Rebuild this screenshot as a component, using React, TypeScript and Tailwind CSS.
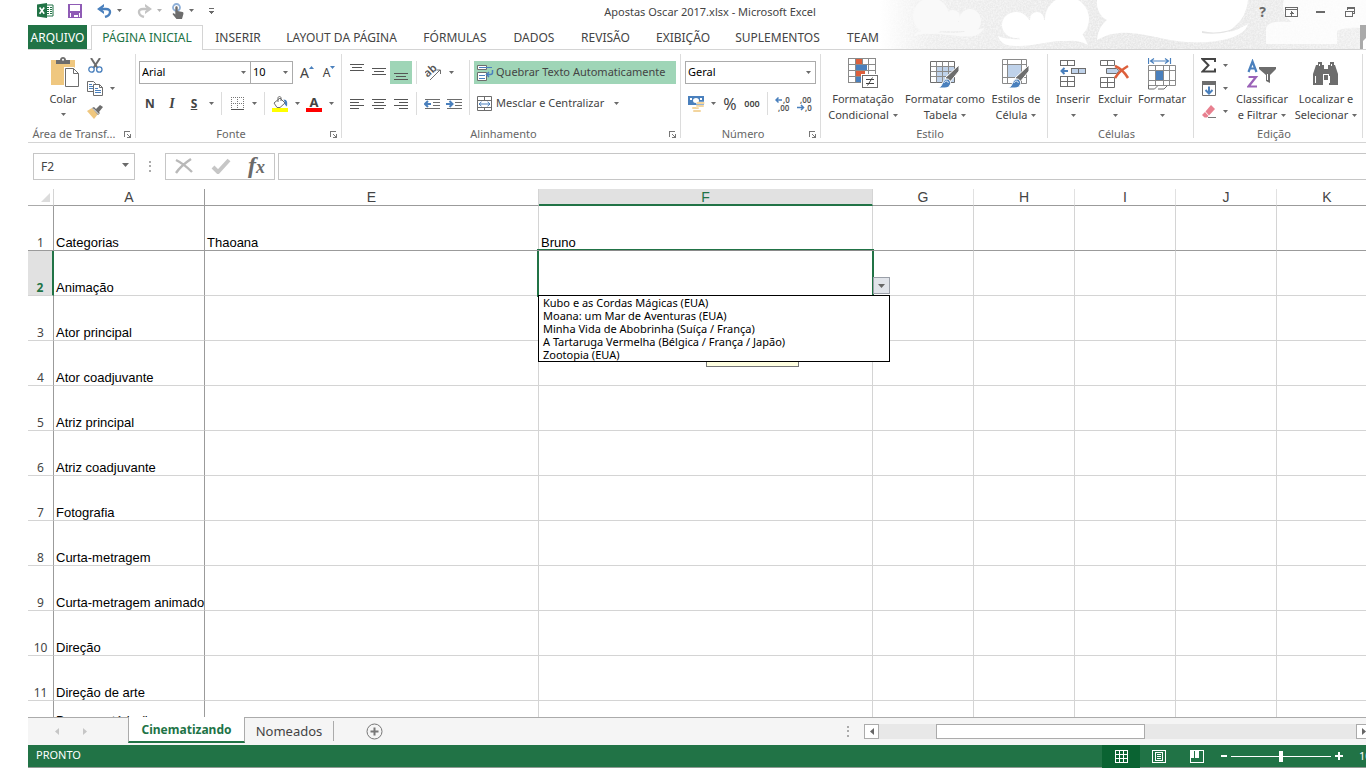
import { useState } from "react"
import type { ReactNode } from "react"

const tabs = [
  { name: "INSERIR", width: "w-[70px]" },
  { name: "LAYOUT DA PÁGINA", width: "w-[137px]" },
  { name: "FÓRMULAS", width: "w-[90px]" },
  { name: "DADOS", width: "w-[68px]" },
  { name: "REVISÃO", width: "w-[75px]" },
  { name: "EXIBIÇÃO", width: "w-[80px]" },
  { name: "SUPLEMENTOS", width: "w-[109px]" },
  { name: "TEAM", width: "w-[62px]" },
]

const rows = [
  "Categorias",
  "Animação",
  "Ator principal",
  "Ator coadjuvante",
  "Atriz principal",
  "Atriz coadjuvante",
  "Fotografia",
  "Curta-metragem",
  "Curta-metragem animado",
  "Direção",
  "Direção de arte",
  "Documentário (longa",
]

const nominees = [
  "Kubo e as Cordas Mágicas (EUA)",
  "Moana: um Mar de Aventuras (EUA)",
  "Minha Vida de Abobrinha (Suíça / França)",
  "A Tartaruga Vermelha (Bélgica / França / Japão)",
  "Zootopia (EUA)",
]

const restColumns = ["G", "H", "I", "J", "K"]

type SvgProps = { w: number; h: number; crisp?: boolean; className?: string; children: ReactNode }

const Svg = ({ w, h, crisp, className = "", children }: SvgProps) => (
  <svg
    width={w}
    height={h}
    viewBox={`0 0 ${w} ${h}`}
    fill="none"
    shapeRendering={crisp ? "crispEdges" : "auto"}
    className={`shrink-0 ${className}`}
    aria-hidden="true"
  >
    {children}
  </svg>
)

const Caret = ({ className = "" }: { className?: string }) => (
  <Svg w={5} h={3} className={className}>
    <path d="M0 0h5L2.5 3z" fill="#6a6a6a" />
  </Svg>
)

/* Quick access icons */
const ExcelIcon = () => (
  <Svg w={17} h={15}>
    <path d="M9 2h7v11H9z" fill="#fff" stroke="#217346" />
    <path d="M10 4.5h2M13 4.5h2M10 6.5h2M13 6.5h2M10 8.5h2M13 8.5h2M10 10.5h2M13 10.5h2" stroke="#217346" />
    <path d="M0 1.5L10 0v15L0 13.5z" fill="#217346" />
    <path d="M2.6 4.5l4.6 6.2M7.2 4.5l-4.6 6.2" stroke="#fff" strokeWidth="1.6" />
  </Svg>
)

const SaveIcon = () => (
  <Svg w={14} h={14} crisp>
    <path d="M0 0h14v14H0z" fill="#8f5bb5" />
    <path d="M2 1h10v6H2zM2 9h10v4H2z" fill="#fff" />
    <path d="M3 9h8v5H3z" fill="#8f5bb5" />
    <path d="M6 11h4v2H6z" fill="#fff" />
  </Svg>
)

const UndoIcon = ({ color }: { color: string }) => (
  <Svg w={15} h={14}>
    <path d="M3 5h6c5.500 0 5.500 6-1 8" stroke={color} strokeWidth="2.400" />
    <path d="M7 0v2.500L4.500 5 7 7.500V10L0 5z" fill={color} />
  </Svg>
)

const TouchIcon = () => (
  <Svg w={12} h={16}>
    <circle cx="4.500" cy="4.500" r="3.500" stroke="#8fb0d8" strokeWidth="1.800" />
    <path d="M3.300 4.500c0-1.800 2.400-1.800 2.400 0V8l4.800 1c1 .3 1 1 .9 2L10 16H4.500L.8 11.500c-.6-1 .6-1.800 1.400-1l1.100 1z" fill="#6d6d6d" />
  </Svg>
)

/* Ribbon icons */
const PasteIcon = () => (
  <Svg w={29} h={31}>
    <path d="M0 3h24v25H0z" fill="#efc77f" />
    <path d="M5 7V3h4c0-4 6-4 6 0h4v4z" fill="#6d6d6d" />
    <circle cx="12" cy="2.800" r="1" fill="#fff" />
    <path d="M13 10h10l6 6v15H13z" fill="#fff" />
    <path d="M14.500 11.500h8l5 5v13h-13zM22.500 11.500v5h5" fill="#fff" stroke="#6d6d6d" />
  </Svg>
)

const CutIcon = () => (
  <Svg w={15} h={15}>
    <path d="M3 0l6.500 10M12 0L5.500 10" stroke="#6d6d6d" strokeWidth="2" />
    <circle cx="3.500" cy="11.500" r="2.700" stroke="#4a80bd" strokeWidth="1.300" />
    <circle cx="11.300" cy="11.500" r="2.700" stroke="#4a80bd" strokeWidth="1.300" />
  </Svg>
)

const CopyIcon = () => (
  <Svg w={16} h={15}>
    <path d="M.5.500h6l2 2v8h-8z" fill="#fff" stroke="#6d6d6d" />
    <path d="M2 3.500h3M2 5.500h4M2 7.500h4" stroke="#4a80bd" />
    <path d="M6.500 3.500h6l3 3v8h-9zM12.500 3.500v3h3" fill="#fff" stroke="#6d6d6d" />
    <path d="M8 7.500h3M8 9.500h6M8 11.500h6" stroke="#4a80bd" />
  </Svg>
)

const BrushIcon = () => (
  <Svg w={16} h={14}>
    <path d="M0 6l5-3 6 6-4 5z" fill="#efc77f" />
    <path d="M5 3l2-1 6 6-2 2zM9 4l4-4 3 2-4 5z" fill="#6d6d6d" />
    <path d="M6 3.500l5.500 5.500" stroke="#fff" />
  </Svg>
)

const BordersIcon = () => (
  <Svg w={13} h={13} crisp>
    <path d="M0 .5h13M0 6.500h13M.5 0v12M6.500 0v12M12.500 0v12" stroke="#777" strokeDasharray="1 1" />
    <path d="M0 12.500h13" stroke="#555" />
  </Svg>
)

const FillIcon = () => (
  <Svg w={16} h={16}>
    <path d="M2 7l6-5 5 5-5 4.500H5z" fill="#fff" stroke="#6d6d6d" />
    <path d="M6 6V2c0-2 3-2 3 0v3" stroke="#6d6d6d" />
    <path d="M11.500 3.500c4 0 4 3 3.500 7-2-1-3-3-2-4z" fill="#4a80bd" />
    <path d="M0 12h16v4H0z" fill="#ff0" />
  </Svg>
)

const linePaths = {
  top: "M0 1.500h14M2 4.500h10M0 7.500h14",
  left: "M0 1.500h14M0 4.500h9M0 7.500h14M0 10.500h9",
  center: "M0 1.500h14M2 4.500h10M0 7.500h14M2 10.500h10",
  right: "M0 1.500h14M5 4.500h9M0 7.500h14M5 10.500h9",
}

const Lines = ({ kind, className }: { kind: keyof typeof linePaths; className?: string }) => (
  <Svg w={14} h={12} crisp className={className}>
    <path d={linePaths[kind]} stroke="#555" />
  </Svg>
)

const OrientationIcon = () => (
  <Svg w={17} h={16}>
    <text x="0" y="10" fontSize="11" fontWeight="600" fill="#555" transform="rotate(-42 5 8)">ab</text>
    <path d="M5 15L15 5M11.500 5H15.500V9" stroke="#6d6d6d" />
  </Svg>
)

const IndentIcon = ({ flip }: { flip?: boolean }) => (
  <Svg w={16} h={12}>
    <path d="M1 1.500h15M9 4.500h7M9 7.500h7M1 10.500h15" stroke="#6d6d6d" shapeRendering="crispEdges" />
    <path d={flip ? "M0 6h6M3.500 3L6.500 6l-3 3" : "M7 6H1M4 3L1 6l3 3"} stroke="#4a80bd" strokeWidth="2" />
  </Svg>
)

const WrapIcon = () => (
  <Svg w={17} h={16}>
    <path d="M.5.500h9v4h-9zM.5 7.500h9v8h-9z" fill="#fff" stroke="#6d6d6d" />
    <path d="M2 2.500h13M2 10.500h6M2 13.500h6" stroke="#4a80bd" />
    <path d="M15.500 5v2.500c0 1.500-1 2-2 2h-4M12 7L9.500 9.500 12 12" stroke="#4a80bd" strokeWidth="1.500" />
  </Svg>
)

const MergeIcon = () => (
  <Svg w={15} h={15}>
    <path d="M.5.500h14v14H.5zM.5 4.500h14M.5 11.500h14M7.500.500v4M7.500 11.500v3" stroke="#6d6d6d" fill="#fff" />
    <path d="M2 8h11M4.500 5.800L2 8l2.500 2.200M10.500 5.800L13 8l-2.500 2.200" stroke="#4a80bd" />
  </Svg>
)

const CurrencyIcon = () => (
  <Svg w={17} h={16}>
    <path d="M0 0h16v9H0z" fill="#4a80bd" />
    <path d="M2 2h2v2H2zM12 2h2v2h-2zM5 4.500a3 2.500 0 106 0 3 2.500 0 10-6 0z" fill="#fff" />
    <path d="M8.500 6h8v2h-8zM8 9h8v2H8zM4 11h7v2H4zM5 14h8v2H5z" fill="#efc77f" stroke="#fff" strokeWidth=".5" />
  </Svg>
)

const DecimalIcon = ({ less }: { less?: boolean }) => (
  <Svg w={16} h={16}>
    <text x={less ? 3 : 8} y="7" fontSize="8" fontWeight="600" fill="#555">{less ? ",00" : ",0"}</text>
    <text x={less ? 8 : 3} y="15" fontSize="8" fontWeight="600" fill="#555">{less ? ",0" : ",00"}</text>
    <path
      d={less ? "M0 11.500h6M4 9l2.500 2.500L4 14" : "M7 4H1M3.500 1.500L1 4l2.500 2.500"}
      stroke="#4a80bd"
      strokeWidth="1.500"
    />
  </Svg>
)

const ConditionalIcon = () => (
  <Svg w={31} h={31} crisp>
    <path d="M.5.500h27v24H.5zM.5 6.500h27M.5 12.500h27M.5 18.500h27M7.500.500v24M14.500.500v24M20.500.500v24" fill="#fff" stroke="#8a8a8a" />
    <path d="M8 1h6v5H8zM8 13h9v5H8z" fill="#dd5f3b" />
    <path d="M8 7h11v5H8zM8 19h5v5H8z" fill="#4a80bd" />
    <path d="M13 16h18v15H13z" fill="#fff" />
    <path d="M14.500 17.500h15v12h-15z" fill="#fff" stroke="#6d6d6d" />
    <path d="M18 21.500h8M18 25.500h8M24.500 19.500l-5 8" stroke="#444" shapeRendering="auto" />
  </Svg>
)

const StyleBrush = ({ x }: { x: number }) => (
  <g transform={`translate(${x} 6)`}>
    <path d="M20 0v6l-9 11-5-4z" fill="#6d6d6d" stroke="#fff" />
    <path d="M-1 23c5-1 4-9 9-9 5 0 5 9-2 9z" fill="#4a80bd" stroke="#fff" />
    <path d="M5 18c1-3 5-2 4 0" stroke="#fff" />
  </g>
)

const TableStyleIcon = () => (
  <Svg w={30} h={30}>
    <path d="M.5 2.500h24v21H.5z" fill="#fff" stroke="#6d6d6d" />
    <path d="M7 8h17v15H7z" fill="#bfd2ea" />
    <path d="M.5 7.500h24M.5 12.500h24M.5 17.500h24M6.500 2.500v21M12.500 2.500v21M18.500 2.500v21" stroke="#8a8a8a" />
    <StyleBrush x={9} />
  </Svg>
)

const CellStyleIcon = () => (
  <Svg w={28} h={30}>
    <path d="M.5.500h24v24H.5z" fill="#fff" stroke="#8a8a8a" />
    <path d="M.5 5.500h24M.5 18.500h24M5.500.500v24M19.500.500v24" stroke="#8a8a8a" />
    <path d="M6 6h13v12H6z" fill="#bfd2ea" />
    <StyleBrush x={7} />
  </Svg>
)

const InsertCellsIcon = () => (
  <Svg w={27} h={28} crisp>
    <path d="M.5.500h14v5H.5zM7.500.500v5M.5 16.500h14v10H.5zM.5 21.500h14M7.500 16.500v10" stroke="#6d6d6d" />
    <path d="M11.500 8.500h14v5h-14z" fill="#bfd2ea" stroke="#6d6d6d" />
    <path d="M18.500 8.500v5" stroke="#6d6d6d" />
    <path d="M8 11H2M4.500 8L1.500 11l3 3" stroke="#4a80bd" strokeWidth="2" shapeRendering="auto" />
  </Svg>
)

const DeleteCellsIcon = () => (
  <Svg w={30} h={28}>
    <path d="M.5.500h14v5H.5zM7.500.500v5M.5 17.500h14v10H.5zM.5 22.500h14M7.500 17.500v10" stroke="#6d6d6d" />
    <path d="M6.500 8.500h10l3 2.500-3 2.500h-10z" fill="#bfd2ea" stroke="#6d6d6d" />
    <path d="M15 6c5 2 10 7 13 12M28 6c-5 3-10 7-13 12" stroke="#dd5f3b" strokeWidth="2.500" />
  </Svg>
)

const FormatCellsIcon = () => (
  <Svg w={28} h={32}>
    <path d="M.5 0v6M22.500 0v6M3 3h17M6 .5L2.500 3 6 5.500M17 .5L20.500 3 17 5.500" stroke="#4a80bd" strokeWidth="1.200" />
    <path d="M.5 7.500h27v20H.5zM.5 12.500h27M.5 22.500h27M7.500 7.500v20M15.500 7.500v20M21.500 7.500v20" stroke="#8a8a8a" fill="#fff" />
    <path d="M8 13h7v9H8z" fill="#4a80bd" />
    <path d="M.5 27v4h6l3-3M10 31h6l3-3" stroke="#6d6d6d" />
  </Svg>
)

const SigmaIcon = () => (
  <Svg w={15} h={15}>
    <path d="M14 4V1H1.500l6 6.200L1.500 13.500H14v-3" stroke="#444" strokeWidth="2" />
  </Svg>
)

const FillDownIcon = () => (
  <Svg w={14} h={15}>
    <path d="M.5.500h13v14H.5z" fill="#fff" stroke="#6d6d6d" />
    <path d="M0 0h14v4H0z" fill="#6d6d6d" />
    <path d="M7 5.500v7M3.500 9L7 12.500 10.500 9" stroke="#4a80bd" strokeWidth="2" />
  </Svg>
)

const EraserIcon = () => (
  <Svg w={14} h={13}>
    <path d="M3.500 6.500L9 0l4 4-6 6.500z" fill="#e8808f" />
    <path d="M3 7l3.500 4-1.500 1.500H2.500L0 10z" fill="#e8808f" />
    <path d="M6 12.500h8" stroke="#777" />
  </Svg>
)

const SortIcon = () => (
  <Svg w={30} h={30}>
    <path d="M1.500 13L5.500 2.500 9.500 13M3 9.500h5" stroke="#4a80bd" strokeWidth="2.200" />
    <path d="M1.500 18H9L1.500 27.500H10" stroke="#9b63b8" strokeWidth="2.200" />
    <path d="M12 8h17v2l-6 6v8l-4-2v-6l-7-6z" fill="#6d6d6d" />
    <path d="M20.500 15v6" stroke="#fff" />
  </Svg>
)

const BinocularsIcon = () => (
  <Svg w={26} h={24}>
    <path d="M5 0h4v3h2v4h4V3h2V0h4v3h1l3 9v11h-9V12h-6v11H0V12l3-9h2z" fill="#6d6d6d" />
    <path d="M2.500 14v7M16.500 14v7M6.500 2v2M18.500 2v2" stroke="#fff" />
    <path d="M11 13h4v5h-4z" fill="#6d6d6d" />
  </Svg>
)

const LauncherIcon = () => (
  <Svg w={7} h={7} crisp>
    <path d="M.5 6V.5H6M3 3l3 3M6.500 3v3.500H3" stroke="#777" />
  </Svg>
)

const Clouds = () => (
  <svg
    className="absolute right-0 top-0 h-[49px] w-[486px]"
    viewBox="0 0 486 49"
    preserveAspectRatio="xMaxYMin slice"
    aria-hidden="true"
  >
    <defs>
      <linearGradient id="sky" x1="0" x2="1">
        <stop offset="0" stopColor="#fff" />
        <stop offset=".1" stopColor="#ededed" />
        <stop offset=".6" stopColor="#e6e6e6" />
        <stop offset="1" stopColor="#ededed" />
      </linearGradient>
      <filter id="grain" x="0" y="0" width="1" height="1">
        <feTurbulence type="fractalNoise" baseFrequency=".6" numOctaves="2" />
        <feColorMatrix values="0 0 0 0 1  0 0 0 0 1  0 0 0 0 1  0 0 0 1.200 -.4" />
      </filter>
    </defs>
    <path d="M0 0h486v49H0z" fill="url(#sky)" />
    <path d="M0 0h486v49H0z" filter="url(#grain)" />
    <g fill="#f9f9f9">
      <circle cx="51" cy="16" r="18" />
      <circle cx="73" cy="17" r="7" />
      <ellipse cx="90" cy="21" rx="11" ry="12" />
      <path d="M48 22h40v9H52z" />
      <path d="M34 36c2-6 12-6 22-4 14 2 28 1 48-4-4 10-18 9-26 8-16-1-30-5-44 0z" />
    </g>
    <g fill="#fff">
      <circle cx="187" cy="19" r="22" />
      <circle cx="157" cy="19" r="7" />
      <ellipse cx="136" cy="25" rx="14" ry="13" />
      <path d="M135 20h50v21h-45z" />
      <path d="M118 36c6 3 20 4 30 3l45-6 9 1c2 2 4 7 6 11-20-11-50 2-72 1-10 0-16-3-18-10z" />
      <path d="M217 0c-1 8 3 17 10 20-5 4-9 10-10 20 25-15 52-3 80 1 26 4 67 0 71-17-8 4-12 7-20 8 9-7 18-14 20-32z" />
    </g>
    <path d="M322 31c12 3 26 1 38-5-9 7-25 9-38 7z" fill="#e4e4e4" />
    <path d="M404 0c-3 10 1 18 8 22-12 0-26-2-26 8v14h71V31c8-4 20-4 29-2V0z" fill="#fff" opacity=".8" />
    <path d="M480 25h6v24h-6z" fill="#aaa" />
    <path d="M483 49v-8l3-3v11z" fill="#fff" />
  </svg>
)

const IconButton = ({ label, className = "", children }: { label: string; className?: string; children: ReactNode }) => (
  <button aria-label={label} title={label} className={`flex h-[23px] shrink-0 justify-center ${className}`}>
    {children}
  </button>
)

const Divider = ({ className = "" }: { className?: string }) => (
  <div className={`h-[23px] w-px shrink-0 bg-[#dcdcdc] ${className}`} />
)

type BigButtonProps = { icon: ReactNode; lines: string[]; className: string }

// one-line labels put the caret underneath, two-line labels put it at the end
const BigButton = ({ icon, lines, className }: BigButtonProps) => (
  <button className={`flex shrink-0 flex-col items-center whitespace-nowrap pt-[2px] leading-4 ${className}`}>
    <span className="flex h-[35px] items-center">{icon}</span>
    <span>{lines[0]}</span>
    <span className="flex h-4 items-center gap-1">
      {lines[1]}
      <Caret />
    </span>
  </button>
)

type GroupProps = { name: string; launcher?: boolean; className: string; children: ReactNode }

const Group = ({ name, launcher, className, children }: GroupProps) => (
  <section className={`flex h-[84px] shrink-0 flex-col border-r border-[#dcdcdc] ${className}`}>
    <div className="flex h-[72px] shrink-0">{children}</div>
    <div className="flex h-4 shrink-0 items-center pr-1 leading-4 text-[#666]">
      <span className="flex-1 whitespace-nowrap pr-1 text-center">{name}</span>
      {launcher && (
        <button aria-label={`Opções de ${name}`}>
          <LauncherIcon />
        </button>
      )}
    </div>
  </section>
)

type PickerProps = { label: string; options: string[]; className: string }

const Picker = ({ label, options, className }: PickerProps) => (
  <div className={`relative h-[23px] shrink-0 ${className}`}>
    <select
      aria-label={label}
      className="h-full w-full appearance-none border border-[#ababab] bg-white pl-[2px] text-[11px] text-black"
    >
      {options.map((option) => (
        <option key={option}>{option}</option>
      ))}
    </select>
    <Caret className="pointer-events-none absolute right-[5px] top-[10px]" />
  </div>
)

const TitleBar = () => (
  <header className="relative flex h-[25px] items-center">
    <div className="flex w-[212px] shrink-0 items-center pb-1 pl-[9px]">
      <ExcelIcon />
      <button aria-label="Salvar" className="ml-[14px]">
        <SaveIcon />
      </button>
      <button aria-label="Desfazer" className="ml-[15px] flex items-center gap-[5px]">
        <UndoIcon color="#4a80bd" />
        <Caret />
      </button>
      <button aria-label="Refazer" className="ml-[15px] flex items-center gap-[5px]">
        <span className="-scale-x-100">
          <UndoIcon color="#c4c4c4" />
        </span>
        <Caret className="opacity-50" />
      </button>
      <button aria-label="Modo de toque" className="ml-[10px] flex items-center gap-[5px]">
        <TouchIcon />
        <Caret />
      </button>
      <button aria-label="Personalizar" className="ml-[15px]">
        <Svg w={5} h={6} crisp>
          <path d="M0 0h5v1H0zM0 3h5L2.500 6z" fill="#6a6a6a" />
        </Svg>
      </button>
    </div>
    <h1 className="flex-1 text-center text-[11px] text-[#444]">Apostas Oscar 2017.xlsx - Microsoft Excel</h1>
    <div className="flex w-[186px] shrink-0 justify-end pb-[2px] pr-[2px]">
      <IconButton label="Ajuda" className="w-[29px] items-center text-[14px] font-bold text-[#6a6a6a]">?</IconButton>
      <IconButton label="Opções de exibição" className="w-[29px] items-center">
        <Svg w={13} h={10} crisp>
          <path d="M.5.500h12v9H.5zM.5 2.500h12M6.500 4v5M4.500 6.500h4M5.500 5.500h2" stroke="#6a6a6a" />
        </Svg>
      </IconButton>
      <IconButton label="Minimizar" className="w-[29px] items-center">
        <Svg w={9} h={2} crisp>
          <path d="M0 0h9v2H0z" fill="#6a6a6a" />
        </Svg>
      </IconButton>
      <IconButton label="Restaurar" className="w-[29px] items-center">
        <Svg w={10} h={10} crisp>
          <path d="M.5 4.500h7v5h-7zM0 4h8v1M2.500 3V.5h7v6H8M2 1.500h8" stroke="#6a6a6a" />
        </Svg>
      </IconButton>
    </div>
  </header>
)

const RibbonTabs = () => (
  <nav className="relative flex h-[25px] border-b border-[#d4d4d4] leading-6 text-[#444]">
    <button className="w-[59px] shrink-0 bg-[#217346] pt-px text-white">ARQUIVO</button>
    <button className="-mb-px ml-1 w-28 shrink-0 border border-b-0 border-[#d4d4d4] bg-white text-[#217346]">
      PÁGINA INICIAL
    </button>
    {tabs.map((tab) => (
      <button key={tab.name} className={`shrink-0 whitespace-nowrap pt-px ${tab.width}`}>
        {tab.name}
      </button>
    ))}
  </nav>
)

const Ribbon = () => (
  <div className="flex h-[93px] overflow-hidden border-b border-[#d4d4d4] pt-1 text-[11px] text-[#444]">
    <Group name="Área de Transf..." launcher className="w-[108px]">
      <button className="ml-3 flex w-[46px] flex-col items-center leading-4">
        <span className="flex h-[37px] items-center pl-1">
          <PasteIcon />
        </span>
        <span>Colar</span>
        <Caret className="mt-[6px]" />
      </button>
      <div className="flex flex-col">
        <IconButton label="Recortar" className="w-[18px] items-center"><CutIcon /></IconButton>
        <div className="flex">
          <IconButton label="Copiar" className="w-[18px] items-center"><CopyIcon /></IconButton>
          <IconButton label="Opções de cópia" className="w-4 items-center"><Caret /></IconButton>
        </div>
        <IconButton label="Pincel de formatação" className="w-[18px] items-center"><BrushIcon /></IconButton>
      </div>
    </Group>

    <Group name="Fonte" launcher className="w-[206px]">
      <div className="flex flex-col gap-2 pl-[3px] pt-[7px]">
        <div className="flex">
          <Picker label="Fonte" options={["Arial", "Calibri"]} className="w-28" />
          <Picker label="Tamanho" options={["10", "11", "12"]} className="-ml-px w-[43px]" />
          <IconButton label="Aumentar fonte" className="ml-[3px] w-[22px] text-[14px] leading-[23px]">
            A
            <Svg w={5} h={3} className="mt-[5px]"><path d="M0 3h5L2.500 0z" fill="#4a80bd" /></Svg>
          </IconButton>
          <IconButton label="Diminuir fonte" className="w-[22px] text-[12px] leading-[23px]">
            A
            <Svg w={5} h={3} className="mt-[5px]"><path d="M0 0h5L2.500 3z" fill="#4a80bd" /></Svg>
          </IconButton>
        </div>
        <div className="flex">
          <IconButton label="Negrito" className="w-[22px] items-center text-[12px] font-bold">N</IconButton>
          <IconButton label="Itálico" className="w-[22px] items-center font-['Liberation_Serif',serif] text-[14px] font-bold italic">I</IconButton>
          <IconButton label="Sublinhado" className="w-[22px] items-center text-[12px] font-bold underline">S</IconButton>
          <IconButton label="Opções de sublinhado" className="w-3 items-center"><Caret /></IconButton>
          <Divider className="mx-1" />
          <IconButton label="Bordas" className="w-[22px] items-center"><BordersIcon /></IconButton>
          <IconButton label="Opções de bordas" className="w-3 items-center"><Caret /></IconButton>
          <Divider className="mx-1" />
          <IconButton label="Cor de preenchimento" className="w-[22px] items-center"><FillIcon /></IconButton>
          <IconButton label="Opções de preenchimento" className="w-3 items-center"><Caret /></IconButton>
          <IconButton label="Cor da fonte" className="w-[22px] flex-col items-center text-[13px] font-bold leading-3">
            A
            <span className="h-1 w-4 bg-[#f00]" />
          </IconButton>
          <IconButton label="Opções de cor" className="w-3 items-center"><Caret /></IconButton>
        </div>
      </div>
    </Group>

    <Group name="Alinhamento" launcher className="w-[339px]">
      <div className="flex flex-col gap-2 pl-1 pt-[7px]">
        <div className="flex">
          <IconButton label="Alinhar em cima" className="w-[22px] items-start pt-[2px]"><Lines kind="top" /></IconButton>
          <IconButton label="Alinhar no meio" className="w-[22px] items-center"><Lines kind="top" /></IconButton>
          <IconButton label="Alinhar embaixo" className="w-[22px] items-end bg-[#9fd5b7]"><Lines kind="top" /></IconButton>
          <Divider className="mx-1" />
          <IconButton label="Orientação" className="w-6 items-center"><OrientationIcon /></IconButton>
          <IconButton label="Opções de orientação" className="w-3"><Caret className="mt-[10px]" /></IconButton>
        </div>
        <div className="flex">
          <IconButton label="Alinhar à esquerda" className="w-[22px] items-center"><Lines kind="left" /></IconButton>
          <IconButton label="Centralizar" className="w-[22px] items-center"><Lines kind="center" /></IconButton>
          <IconButton label="Alinhar à direita" className="w-[22px] items-center"><Lines kind="right" /></IconButton>
          <Divider className="mx-1" />
          <IconButton label="Diminuir recuo" className="w-[22px] items-center"><IndentIcon /></IconButton>
          <IconButton label="Aumentar recuo" className="w-[22px] items-center"><IndentIcon flip /></IconButton>
        </div>
      </div>
      <div className="ml-[4px] mt-[6px] h-[55px] w-px bg-[#dcdcdc]" />
      <div className="flex flex-col gap-2 pl-1 pt-[7px]">
        <button className="flex h-[23px] w-[202px] items-center gap-[2px] whitespace-nowrap bg-[#9fd5b7] pl-[3px]">
          <WrapIcon />
          Quebrar Texto Automaticamente
        </button>
        <button className="flex h-[23px] items-center gap-1 whitespace-nowrap pl-[3px]">
          <MergeIcon />
          Mesclar e Centralizar
          <Caret className="ml-[6px]" />
        </button>
      </div>
    </Group>

    <Group name="Número" launcher className="w-[140px]">
      <div className="flex flex-col gap-2 pl-1 pt-[7px]">
        <Picker label="Formato de número" options={["Geral", "Número", "Moeda"]} className="w-[131px]" />
        <div className="flex">
          <IconButton label="Formato contábil" className="w-[22px] items-center"><CurrencyIcon /></IconButton>
          <IconButton label="Opções contábeis" className="w-3 items-center"><Caret /></IconButton>
          <IconButton label="Porcentagem" className="w-[22px] items-center text-[16px]">%</IconButton>
          <IconButton label="Separador de milhares" className="w-[22px] items-center text-[9px] font-semibold">000</IconButton>
          <Divider className="mx-1" />
          <IconButton label="Aumentar casas" className="w-[22px] items-center"><DecimalIcon /></IconButton>
          <IconButton label="Diminuir casas" className="w-[22px] items-center"><DecimalIcon less /></IconButton>
        </div>
      </div>
    </Group>

    <Group name="Estilo" className="w-[227px]">
      <BigButton icon={<ConditionalIcon />} lines={["Formatação", "Condicional"]} className="w-[84px]" />
      <BigButton icon={<TableStyleIcon />} lines={["Formatar como", "Tabela"]} className="w-[80px]" />
      <BigButton icon={<CellStyleIcon />} lines={["Estilos de", "Célula"]} className="w-[62px]" />
    </Group>

    <Group name="Células" className="w-[146px]">
      <BigButton icon={<InsertCellsIcon />} lines={["Inserir"]} className="ml-1 w-[42px]" />
      <BigButton icon={<DeleteCellsIcon />} lines={["Excluir"]} className="w-[42px]" />
      <BigButton icon={<FormatCellsIcon />} lines={["Formatar"]} className="w-[52px]" />
    </Group>

    <Group name="Edição" className="w-[169px]">
      <div className="flex w-9 shrink-0 flex-col pl-1">
        {[
          { label: "AutoSoma", icon: <SigmaIcon /> },
          { label: "Preencher", icon: <FillDownIcon /> },
          { label: "Limpar", icon: <EraserIcon /> },
        ].map((item) => (
          <div key={item.label} className="flex">
            <IconButton label={item.label} className="w-[21px] items-center">{item.icon}</IconButton>
            <IconButton label={`Opções de ${item.label}`} className="w-3 items-center"><Caret /></IconButton>
          </div>
        ))}
      </div>
      <BigButton icon={<SortIcon />} lines={["Classificar", "e Filtrar"]} className="w-[64px]" />
      <BigButton icon={<BinocularsIcon />} lines={["Localizar e", "Selecionar"]} className="w-[64px]" />
    </Group>
  </div>
)

const FormulaBar = () => (
  <div className="flex h-[46px] items-center pl-[5px]">
    <div className="relative h-[27px] w-[102px] shrink-0">
      <input
        aria-label="Caixa de nome"
        defaultValue="F2"
        className="h-full w-full border border-[#c6c6c6] pl-[7px] text-[12px] text-[#444]"
      />
      <Svg w={7} h={4} className="absolute right-[6px] top-[10px]">
        <path d="M0 0h7L3.500 4z" fill="#6a6a6a" />
      </Svg>
    </div>
    <Svg w={2} h={11} crisp className="mx-[14px]">
      <path d="M0 0h2v2H0zM0 4h2v2H0zM0 9h2v2H0z" fill="#ababab" />
    </Svg>
    <div className="flex h-[27px] w-[110px] shrink-0 items-center justify-between border border-[#c6c6c6] px-[9px]">
      <button aria-label="Cancelar">
        <Svg w={18} h={16}>
          <path d="M1 2c6 3 11 7 16 12M16 1C10 5 5 9 1 15" stroke="#b9b9b9" strokeWidth="2.400" />
        </Svg>
      </button>
      <button aria-label="Inserir">
        <Svg w={20} h={16}>
          <path d="M2 9l5 5L18 2" stroke="#c6c6c6" strokeWidth="4" />
        </Svg>
      </button>
      <button
        aria-label="Inserir função"
        className="font-['Liberation_Serif',serif] text-[24px] font-bold italic leading-6 text-[#6a6a6a]"
      >
        f<span className="text-[18px]">x</span>
      </button>
    </div>
    <input aria-label="Barra de fórmulas" className="ml-[3px] h-[27px] min-w-0 flex-1 border border-r-0 border-[#c6c6c6] px-2" />
  </div>
)

const NomineeList = () => {
  const [open, setOpen] = useState(true)

  return (
    <>
      <div className="absolute -left-[2px] -top-[2px] h-12 w-[337px] border-2 border-[#217346]" />
      <div className="absolute -left-[2px] -top-px h-px w-[337px] bg-[#8a8a8a]" />
      <button
        aria-label="Abrir lista"
        onClick={() => setOpen(!open)}
        className="absolute left-[334px] top-[26px] flex h-[17px] w-[17px] items-center justify-center border border-[#9a9fa8] bg-[#e1e4ea]"
      >
        <Svg w={7} h={4}>
          <path d="M0 0h7L3.500 4z" fill="#666" />
        </Svg>
      </button>
      {open && (
        <>
          <div className="absolute left-[167px] top-[60px] h-14 w-[93px] border border-[#777] bg-[#ffffe1]" />
          <ul
            role="listbox"
            aria-label="Animação"
            className="absolute -left-px top-[44px] w-[352px] border border-black bg-white pl-1 font-['Noto_Sans',sans-serif] text-[11px] leading-[13px] text-black"
          >
            {nominees.map((nominee) => (
              <li key={nominee} role="option" aria-selected="false" className="whitespace-nowrap text-left">
                {nominee}
              </li>
            ))}
          </ul>
        </>
      )}
    </>
  )
}

const Sheet = () => (
  <main className="min-h-0 flex-1 overflow-hidden">
    <table className="w-[1350px] table-fixed border-separate border-spacing-0 font-['Liberation_Sans',sans-serif] text-[13px] text-black">
      <colgroup>
        <col className="w-[26px]" />
        <col className="w-[151px]" />
        <col className="w-[334px]" />
        <col className="w-[334px]" />
        {restColumns.map((column) => (
          <col key={column} className="w-[101px]" />
        ))}
      </colgroup>
      <thead>
        <tr className="h-[17px] text-[14px] leading-[14px] text-[#444]">
          <th className="border-b border-r border-b-[#ababab] border-r-[#d4d4d4] p-0">
            <Svg w={9} h={9} className="ml-auto mr-[3px]">
              <path d="M9 0v9H0z" fill="#dcdcdc" />
            </Svg>
          </th>
          <th className="border-b border-r border-[#9b9b9b] p-0 font-normal">A</th>
          <th className="border-b border-r border-b-[#9b9b9b] border-r-[#d4d4d4] p-0 font-normal">E</th>
          <th className="border-b-2 border-r border-b-[#217346] border-r-[#d4d4d4] bg-[#e1e1e1] p-0 font-normal text-[#217346]">F</th>
          {restColumns.map((column) => (
            <th key={column} className="border-b border-r border-b-[#9b9b9b] border-r-[#e1e1e1] p-0 font-normal">
              {column}
            </th>
          ))}
        </tr>
      </thead>
      <tbody>
        {rows.map((category, i) => {
          const line = i === 0 ? "border-b-[#9b9b9b]" : "border-b-[#d4d4d4]"
          const head =
            i === 1
              ? "border-r-2 border-r-[#217346] bg-[#e1e1e1] font-bold text-[#217346]"
              : "border-r border-r-[#9b9b9b] font-normal text-[#444]"
          return (
            <tr key={category} className={i === 11 ? "h-7" : "h-[45px]"}>
              <th className={`border-b p-0 text-center align-bottom font-['Noto_Sans',sans-serif] text-[12px] leading-[14px] ${line} ${head}`}>
                {i < 11 && i + 1}
              </th>
              <td className={`whitespace-nowrap border-b border-r border-r-[#9b9b9b] p-0 pl-[2px] align-bottom leading-[14px] ${line}`}>
                {category}
              </td>
              <td className={`border-b border-r border-r-[#d4d4d4] p-0 pl-[2px] align-bottom leading-[14px] ${line}`}>
                {i === 0 && "Thaoana"}
              </td>
              <td
                className={`border-b border-r border-r-[#d4d4d4] p-0 pl-[2px] align-bottom leading-[14px] ${line} ${i === 1 ? "relative z-10" : ""}`}
              >
                {i === 0 && "Bruno"}
                {i === 1 && <NomineeList />}
              </td>
              {restColumns.map((column) => (
                <td key={column} className={`border-b border-r border-r-[#d4d4d4] p-0 ${line}`} />
              ))}
            </tr>
          )
        })}
      </tbody>
    </table>
  </main>
)

const ScrollArrow = ({ right }: { right?: boolean }) => (
  <button
    aria-label={right ? "Rolar para a direita" : "Rolar para a esquerda"}
    className="flex h-[15px] w-[15px] shrink-0 items-center justify-center border border-[#ababab] bg-white"
  >
    <Svg w={4} h={7}>
      <path d={right ? "M0 0v7l4-3.500z" : "M4 0v7L0 3.500z"} fill="#666" />
    </Svg>
  </button>
)

const SheetTabs = () => (
  <div className="relative z-20 flex h-7 shrink-0 border-t border-[#ababab] bg-[#f5f5f5] text-[13px] text-[#444]">
    <div className="flex w-[100px] shrink-0 items-center gap-6 pl-[27px]">
      <button aria-label="Planilha anterior">
        <Svg w={4} h={7}><path d="M4 0v7L0 3.500z" fill="#c6c6c6" /></Svg>
      </button>
      <button aria-label="Próxima planilha">
        <Svg w={4} h={7}><path d="M0 0v7l4-3.500z" fill="#c6c6c6" /></Svg>
      </button>
    </div>
    <button className="-mt-px h-[26px] w-[117px] shrink-0 border-x border-b-2 border-x-[#ababab] border-b-[#217346] bg-white pt-[2px] text-[12px] font-bold text-[#217346]">
      Cinematizando
    </button>
    <button className="mt-[3px] h-5 w-[89px] shrink-0 border-r border-[#ababab] leading-5">Nomeados</button>
    <button aria-label="Nova planilha" className="ml-8 h-[26px]">
      <Svg w={17} h={17}>
        <circle cx="8.500" cy="8.500" r="7.500" stroke="#777" />
        <path d="M8.500 4.500v8M4.500 8.500h8" stroke="#777" strokeWidth="2" />
      </Svg>
    </button>
    <div className="flex-1" />
    <div className="-mr-[5px] flex w-[525px] shrink-0 items-center">
      <Svg w={2} h={11} crisp className="ml-[1px] mr-[15px]">
        <path d="M0 0h2v2H0zM0 4h2v2H0zM0 9h2v2H0z" fill="#ababab" />
      </Svg>
      <ScrollArrow />
      <div className="h-[15px] flex-1 bg-[#e8e8e8] pl-[57px]">
        <div className="h-[15px] w-[209px] border border-[#ababab] bg-white" />
      </div>
      <ScrollArrow right />
    </div>
  </div>
)

const StatusBar = () => {
  const [zoom, setZoom] = useState(100)

  return (
    <footer className="flex h-[23px] shrink-0 items-center border-b border-[#8f9a93] bg-[#217346] pl-2 text-[11px] text-white">
      <span className="flex-1 pb-px">PRONTO</span>
      <IconButton label="Normal" className="w-[38px] items-center bg-[#0a6332]">
        <Svg w={13} h={13} crisp>
          <path d="M.5.500h12v12H.5zM.5 4.500h12M.5 8.500h12M4.500.500v12M8.500.500v12" stroke="#fff" />
        </Svg>
      </IconButton>
      <IconButton label="Layout da página" className="w-[38px] items-center">
        <Svg w={14} h={13} crisp>
          <path d="M.5.500h13v12H.5zM3.500 2.500h7v8h-7zM5 4.500h4M5 6.500h4M5 8.500h4" stroke="#fff" />
        </Svg>
      </IconButton>
      <IconButton label="Quebra de página" className="w-[38px] items-center">
        <Svg w={14} h={13} crisp>
          <path d="M.5.500h13v12H.5z" stroke="#fff" />
          <path d="M1 1h3v7H1zM5 1h4v7H5z" fill="#fff" />
        </Svg>
      </IconButton>
      <button aria-label="Reduzir" className="ml-[5px] h-[2px] w-[6px] bg-white" onClick={() => setZoom(zoom - 10)} />
      <input
        type="range"
        aria-label="Zoom"
        min={10}
        max={190}
        value={zoom}
        onChange={(e) => setZoom(Number(e.target.value))}
        className="mx-1 h-[11px] w-[100px] appearance-none bg-[linear-gradient(#fff,#fff)] bg-[length:100%_1px] bg-center bg-no-repeat [&::-webkit-slider-thumb]:h-[11px] [&::-webkit-slider-thumb]:w-1 [&::-webkit-slider-thumb]:appearance-none [&::-webkit-slider-thumb]:bg-white"
      />
      <button aria-label="Ampliar" onClick={() => setZoom(zoom + 10)}>
        <Svg w={8} h={8} crisp>
          <path d="M3 0h2v8H3zM0 3h8v2H0z" fill="#fff" />
        </Svg>
      </button>
      <span className="ml-4 w-[7px] whitespace-nowrap">{zoom}%</span>
    </footer>
  )
}

const App = () => {
  return (
    <div className="flex h-screen flex-col overflow-hidden bg-white pl-7 font-['Noto_Sans','Open_Sans',sans-serif] text-[12px]">
      <div className="relative shrink-0">
        <Clouds />
        <TitleBar />
        <RibbonTabs />
      </div>
      <div className="shrink-0">
        <Ribbon />
        <FormulaBar />
      </div>
      <Sheet />
      <SheetTabs />
      <StatusBar />
    </div>
  )
}

export default App
